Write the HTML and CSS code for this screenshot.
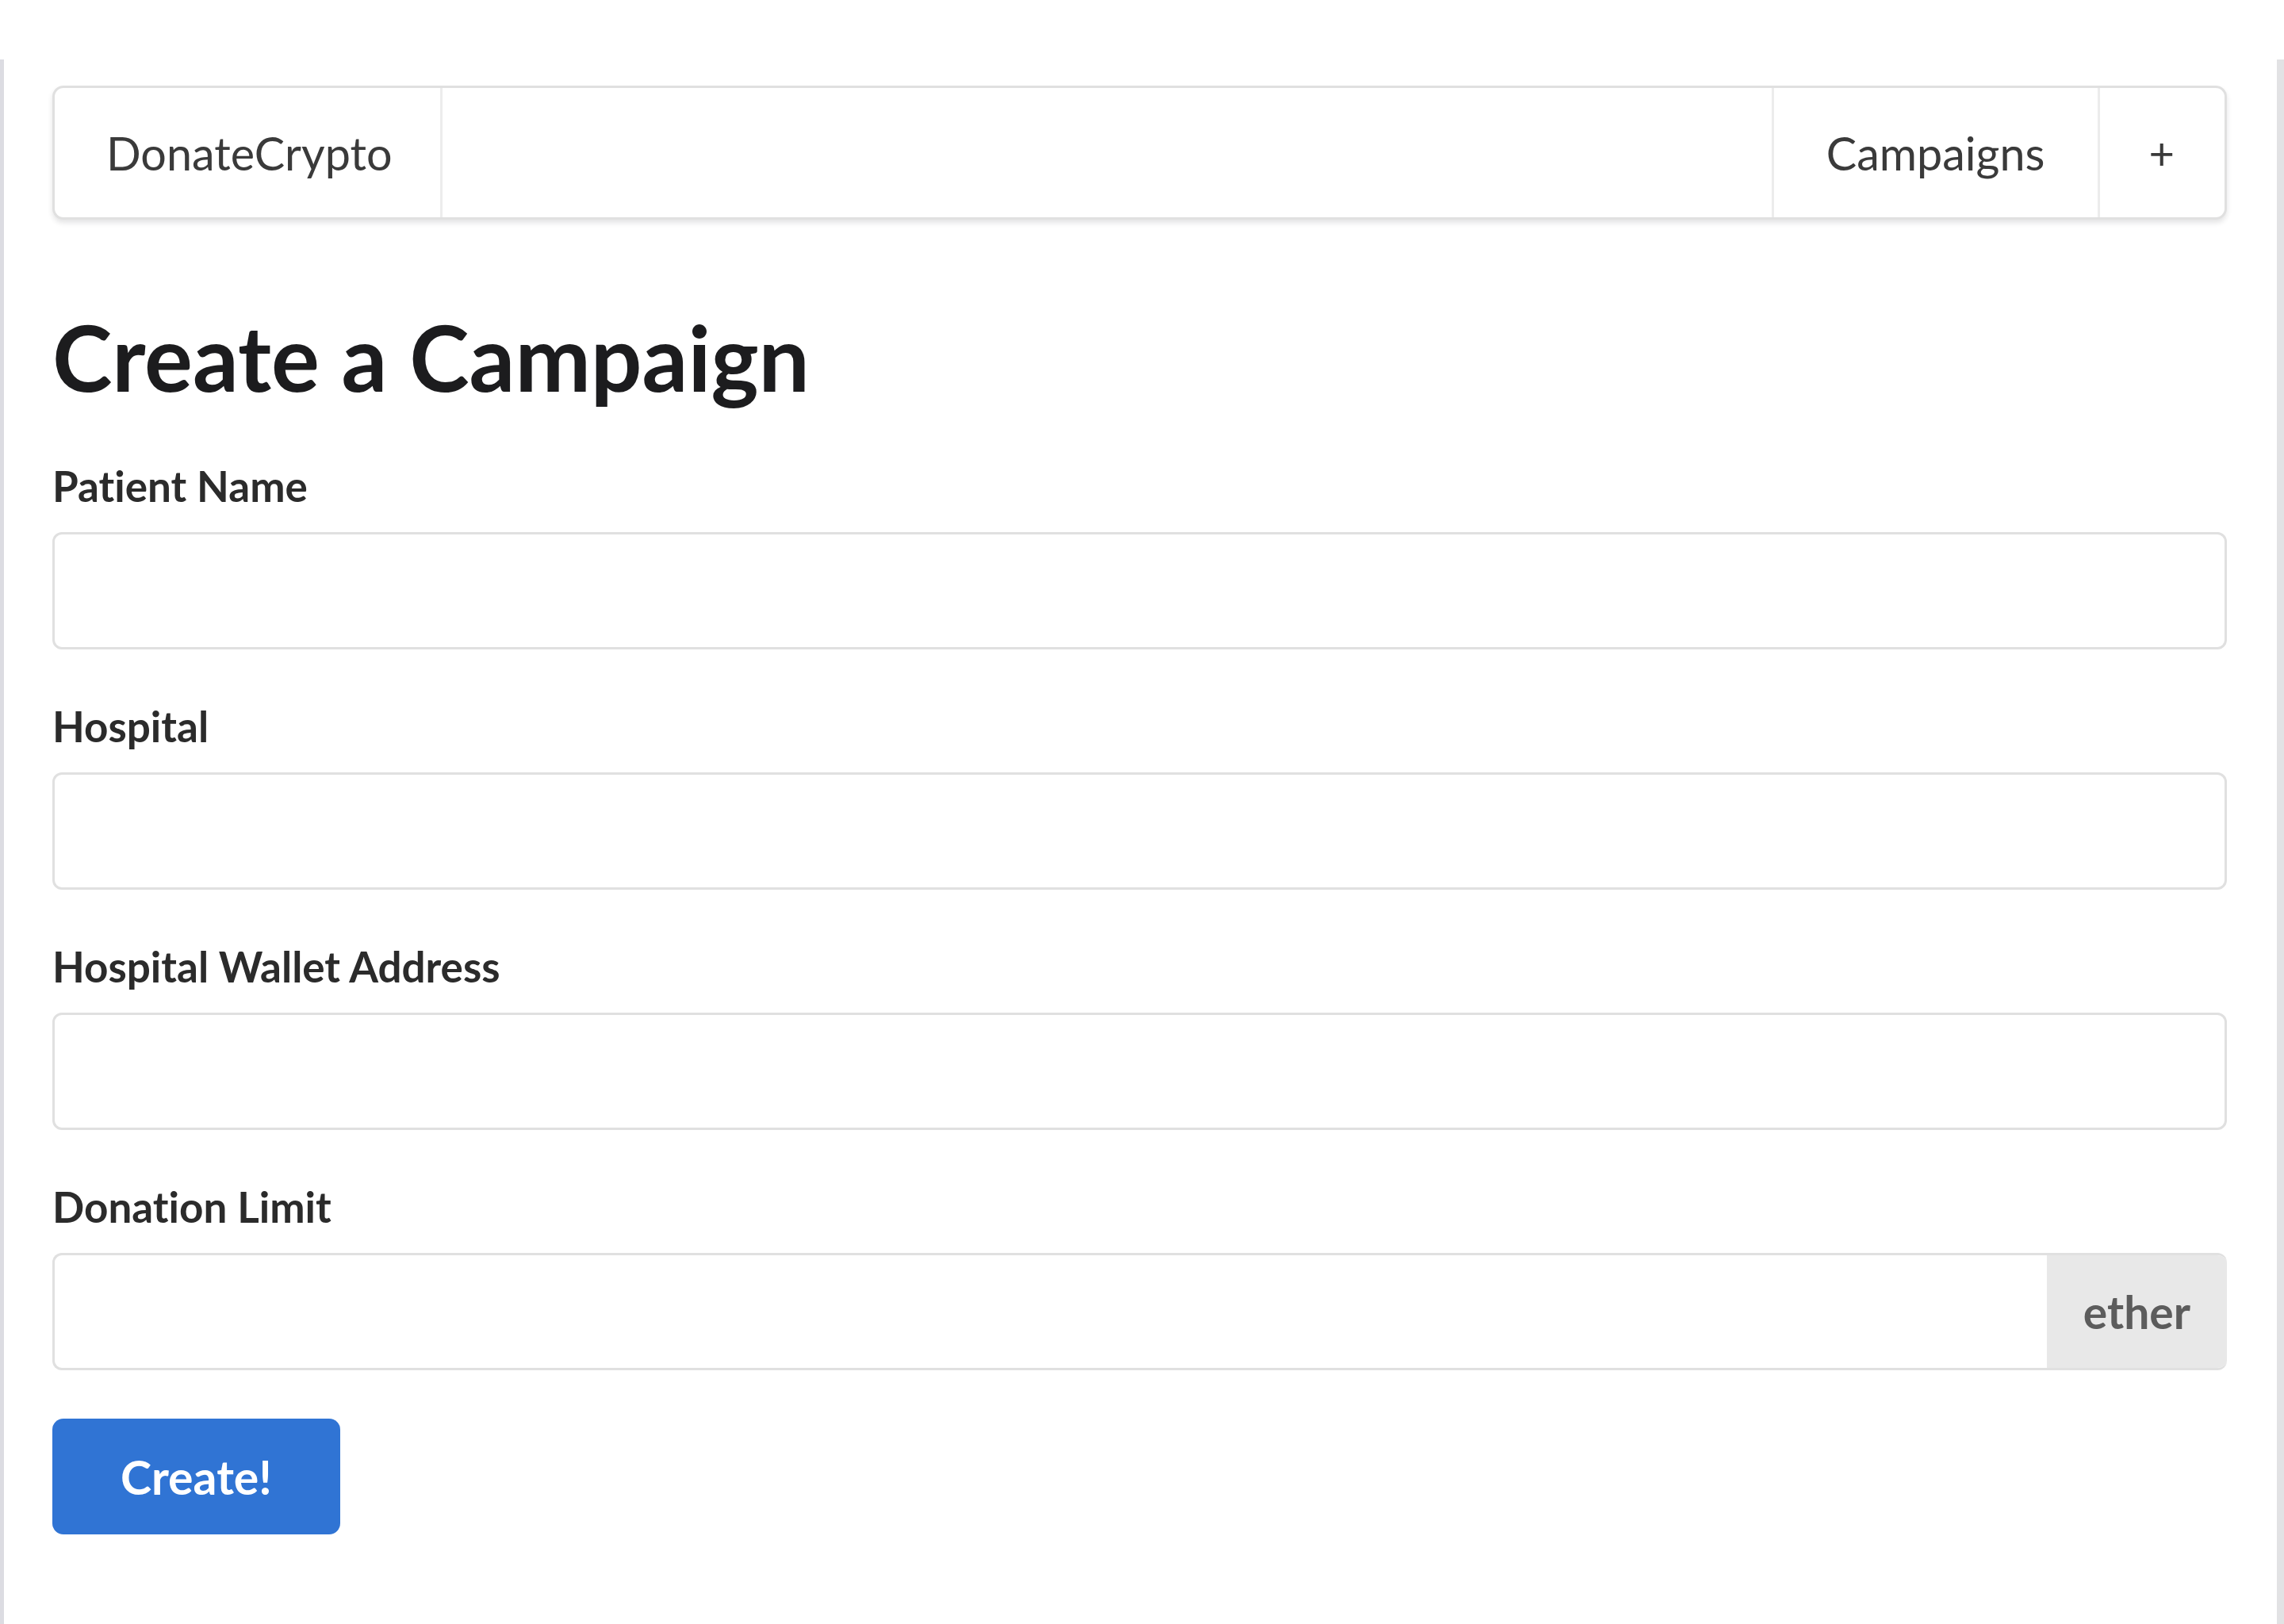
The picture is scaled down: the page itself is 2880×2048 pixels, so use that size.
FILE: index.html
```html
<!DOCTYPE html>
<html lang="en">
<head>
<meta charset="utf-8">
<title>Create a Campaign</title>
<link rel="stylesheet" href="styles.css">
</head>
<body>
<div class="frame">
  <nav class="menu">
    <a class="item brand">DonateCrypto</a>
    <div class="spacer"></div>
    <a class="item divided">Campaigns</a>
    <a class="item divided plus">+</a>
  </nav>

  <h3 class="title">Create a Campaign</h3>

  <form class="form">
    <div class="field">
      <label class="label">Patient Name</label>
      <div class="input"></div>
    </div>
    <div class="field">
      <label class="label">Hospital</label>
      <div class="input"></div>
    </div>
    <div class="field">
      <label class="label">Hospital Wallet Address</label>
      <div class="input"></div>
    </div>
    <div class="field">
      <label class="label">Donation Limit</label>
      <div class="input labeled">
        <div class="input-area"></div>
        <div class="unit">ether</div>
      </div>
    </div>
    <div class="actions">
      <button type="button" class="button">Create!</button>
    </div>
  </form>
</div>
</body>
</html>
```

FILE: styles.css
```css
html, body {
  margin: 0;
  padding: 0;
  background: #ffffff;
}

body {
  font-family: Lato, "Open Sans", "Liberation Sans", sans-serif;
  font-variant-ligatures: none;
  color: #222;
}

.frame {
  margin-top: 75px;
  min-height: 1973px;
  box-sizing: border-box;
  border-left: 5px solid #dcdce2;
  border-right: 9px solid #e2e2e4;
  padding: 33px 63px 0 61px;
}

.menu {
  display: flex;
  align-items: stretch;
  height: 169px;
  box-sizing: border-box;
  border: 3px solid #e0e0e0;
  border-radius: 14px;
  box-shadow: 0 4px 6px rgba(34, 36, 38, 0.12);
  background: #fff;
}

.item {
  display: flex;
  align-items: center;
  padding: 0 66px 0 66px;
  font-size: 57.5px;
  color: #3a3a3a;
  text-decoration: none;
}

.brand {
  padding: 0 60px 0 65px;
  border-right: 3px solid #ececec;
}

.spacer {
  flex: 1;
}

.divided {
  border-left: 3px solid #ececec;
}

.plus {
  padding: 0 63px 0 62px;
  font-size: 56px;
}

.title {
  margin: 106px 0 0;
  font-size: 114px;
  line-height: 134px;
  font-weight: 700;
  color: #1c1c1e;
}

.form {
  margin-top: 65px;
  display: flex;
  flex-direction: column;
  gap: 66px;
}

.field {
  display: flex;
  flex-direction: column;
  gap: 27px;
}

.label {
  font-size: 53px;
  line-height: 62px;
  font-weight: 700;
  color: #2b2b2b;
}

.input {
  height: 148px;
  box-sizing: border-box;
  border: 3px solid #e0e0e0;
  border-radius: 12px;
  background: #fff;
}

.input.labeled {
  display: flex;
  overflow: hidden;
  border-right: none;
}

.input-area {
  flex: 1;
}

.unit {
  display: flex;
  align-items: center;
  padding: 0 46px;
  margin: -3px 0;
  background: #e8e8e8;
  font-size: 57px;
  font-weight: 700;
  color: #5c5c5c;
  border-radius: 0 12px 12px 0;
}

.actions {
  margin-top: -5px;
}

.button {
  height: 146px;
  padding: 0 86px;
  border: none;
  border-radius: 14px;
  background: #3074d4;
  color: #fff;
  font-family: Lato, "Open Sans", "Liberation Sans", sans-serif;
  font-variant-ligatures: none;
  font-size: 59px;
  font-weight: 700;
}
```
